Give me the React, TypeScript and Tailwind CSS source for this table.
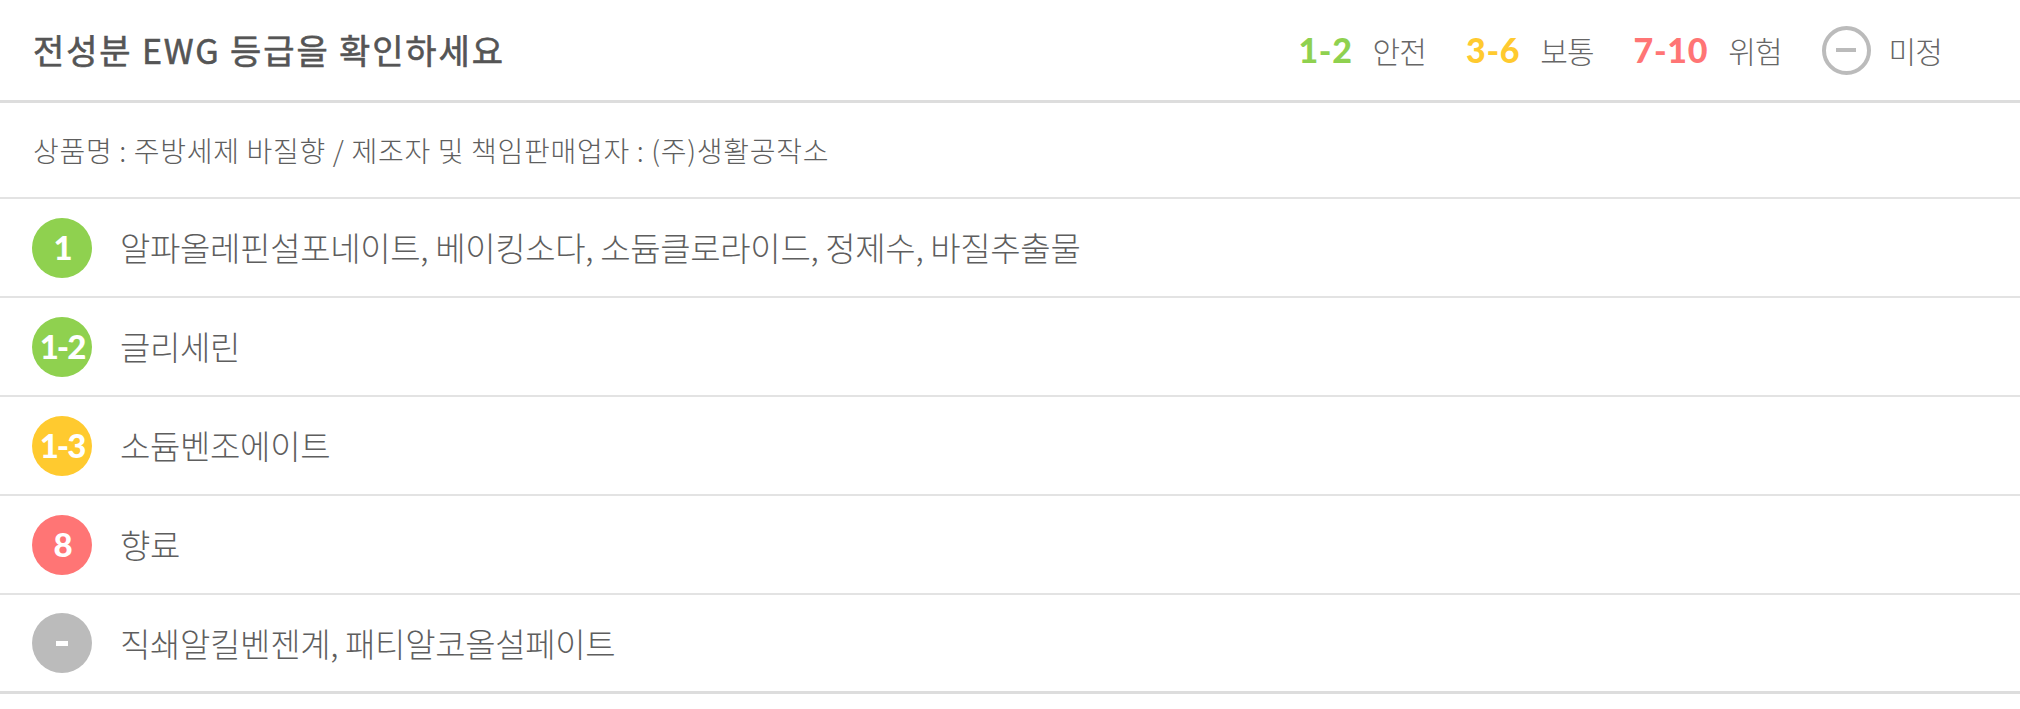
import React from 'react';

type Ingredient = {
  grade: string;
  badgeClass: string;
  name: string;
};

const ingredients: Ingredient[] = [
  {grade: '1', badgeClass: 'bg-[#8fd14f]', name: '알파올레핀설포네이트, 베이킹소다, 소듐클로라이드, 정제수, 바질추출물'},
  {grade: '1-2', badgeClass: 'bg-[#8fd14f]', name: '글리세린'},
  {grade: '1-3', badgeClass: 'bg-[#ffca2f]', name: '소듐벤조에이트'},
  {grade: '8', badgeClass: 'bg-[#ff7575]', name: '향료'},
  {grade: '-', badgeClass: 'bg-[#bbbbbb]', name: '직쇄알킬벤젠계, 패티알코올설페이트'},
];

const legend = [
  {range: '1-2', colorClass: 'text-[#8fd14f]', label: '안전'},
  {range: '3-6', colorClass: 'text-[#ffca2f]', label: '보통'},
  {range: '7-10', colorClass: 'text-[#ff7575]', label: '위험'},
];

const kr = "font-['Noto_Sans_CJK_KR',sans-serif]";
const num = "font-['Lato',sans-serif]";

const GradeBadge: React.FC<{grade: string; className: string}> = ({grade, className}) => (
  <div className={`w-[60px] h-[60px] shrink-0 rounded-full flex items-center justify-center ${className}`}>
    {grade === '-' ? (
      <span className="block w-[12px] h-[5px] bg-white" />
    ) : (
      <span className={`${num} text-white font-black text-[33px] leading-none tracking-[-0.06em]`}>{grade}</span>
    )}
  </div>
);

export default function App() {
  return (
    <div className="w-full bg-white">
      <header className="h-[103px] flex items-center justify-between pl-[33px] pr-[78px] border-b-[3px] border-[#dddddd]">
        <h1 className={`${kr} text-[34px] font-normal text-[#555555] tracking-[0.055em] leading-none [-webkit-text-stroke:0.6px_#555555]`}>
          전성분 EWG 등급을 확인하세요
        </h1>
        <div className="flex items-center">
          {legend.map((item) => (
            <div key={item.range} className="flex items-center gap-[20px] mr-[40px]">
              <span className={`${num} ${item.colorClass} font-black text-[34px] leading-none tracking-[0.02em]`}>{item.range}</span>
              <span className={`${kr} text-[30px] font-light text-[#666666] tracking-[-0.03em] leading-none`}>{item.label}</span>
            </div>
          ))}
          <div className="flex items-center gap-[18px]">
            <div className="w-[49px] h-[49px] rounded-full border-[4px] border-[#bbbbbb] flex items-center justify-center">
              <span className="block w-[20px] h-[4px] bg-[#bbbbbb]" />
            </div>
            <span className={`${kr} text-[30px] font-light text-[#666666] tracking-[-0.03em] leading-none`}>미정</span>
          </div>
        </div>
      </header>

      <div className="h-[96px] flex items-center pl-[33px] border-b-2 border-[#e3e3e3]">
        <p className={`${kr} text-[28px] font-light text-[#5e5e5e] tracking-[0.025em] leading-none`}>
          상품명 : 주방세제 바질향 / 제조자 및 책임판매업자 : (주)생활공작소
        </p>
      </div>

      <ul>
        {ingredients.map((item, i) => (
          <li
            key={item.name}
            className={`h-[99px] flex items-center gap-[28px] pl-[32px] ${
              i === ingredients.length - 1 ? 'border-b-[3px] border-[#dddddd]' : 'border-b-2 border-[#e3e3e3]'
            }`}
          >
            <GradeBadge grade={item.grade} className={item.badgeClass} />
            <span className={`${kr} text-[33px] font-light text-[#5e5e5e] tracking-[-0.01em] leading-none`}>{item.name}</span>
          </li>
        ))}
      </ul>
    </div>
  );
}
